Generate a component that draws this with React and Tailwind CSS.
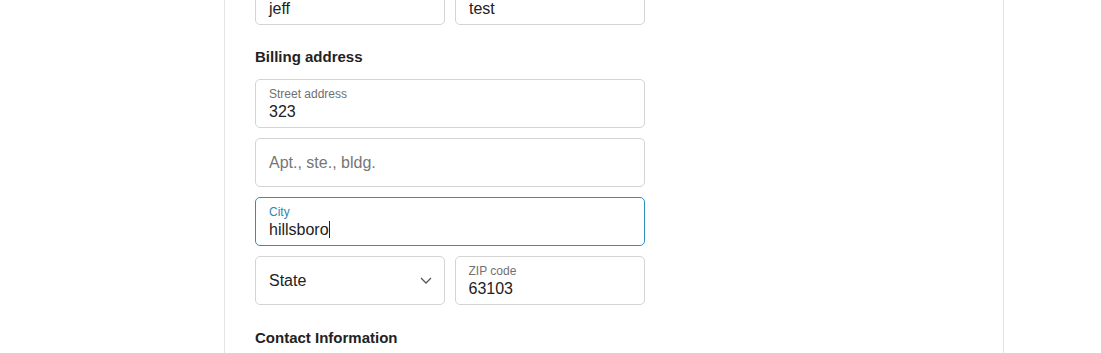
import React from 'react';

function Field({ label, value, placeholder, focused, caret, className = '' }) {
  return (
    <div
      className={`h-[49px] rounded-[5px] border bg-white px-[13px] flex flex-col justify-center ${
        focused ? 'border-[#2f8fb8]' : 'border-[#d4d4d4]'
      } ${className}`}
    >
      {label && (
        <div className={`text-[12px] leading-[14px] ${focused ? 'text-[#2f86b8]' : 'text-[#707070]'}`}>
          {label}
        </div>
      )}
      {value !== undefined ? (
        <div className="flex items-center pt-[1px] text-[16px] leading-[19px] text-[#222]">
          <span>{value}</span>
          {caret && <span className="inline-block h-[17px] w-px bg-[#222]" />}
        </div>
      ) : (
        <div className="text-[16px] leading-[19px] text-[#767676]">{placeholder}</div>
      )}
    </div>
  );
}

export default function App() {
  return (
    <div className="h-[353px] overflow-hidden bg-white font-['Liberation_Sans',Arial,sans-serif]">
      <div className="ml-[224px] flex h-full w-[780px] flex-col border-x border-[#e4e4e4] pl-[30px]">
        <div className="-mt-[24px] w-[390px]">
          {/* name row */}
          <div className="flex gap-[10px]">
            <Field label="First name" value="jeff" className="flex-1" />
            <Field label="Last name" value="test" className="flex-1" />
          </div>

          <h2 className="mt-[22px] text-[15px] font-bold leading-[20px] text-[#222]">Billing address</h2>

          <div className="mt-[12px] flex flex-col gap-[10px]">
            <Field label="Street address" value="323" />
            <Field placeholder="Apt., ste., bldg." />
            <Field label="City" value="hillsboro" focused caret />
            <div className="flex gap-[10px]">
              <div className="flex h-[49px] flex-1 items-center justify-between rounded-[5px] border border-[#d4d4d4] bg-white pl-[13px] pr-[12px]">
                <span className="text-[16px] text-[#222]">State</span>
                <svg width="12" height="7" viewBox="0 0 12 7" fill="none">
                  <path d="M1 1l5 5 5-5" stroke="#555" strokeWidth="1.3" />
                </svg>
              </div>
              <Field label="ZIP code" value="63103" className="flex-1" />
            </div>
          </div>

          <h2 className="mt-[23px] text-[15px] font-bold leading-[20px] text-[#222]">Contact Information</h2>
        </div>
      </div>
    </div>
  );
}
